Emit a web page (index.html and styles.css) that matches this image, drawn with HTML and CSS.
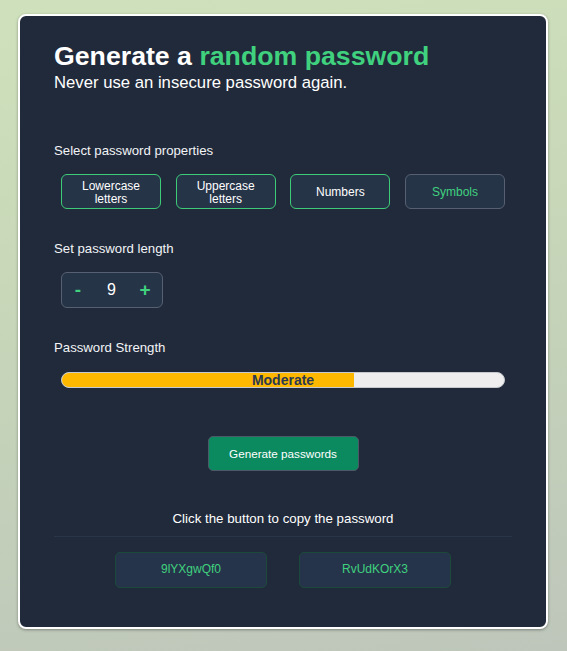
FILE: index.html
```html
<!DOCTYPE html>
<html lang="en">
<head>
<meta charset="utf-8">
<title>Password Generator</title>
<link rel="stylesheet" href="styles.css">
</head>
<body>
<div class="page">
  <main class="card">
    <header class="head">
      <h1 class="title">Generate a <span class="accent">random password</span></h1>
      <p class="subtitle">Never use an insecure password again.</p>
    </header>

    <section class="section first">
      <h2 class="label">Select password properties</h2>
      <div class="props">
        <button class="prop on">Lowercase<br>letters</button>
        <button class="prop on">Uppercase<br>letters</button>
        <button class="prop on">Numbers</button>
        <button class="prop off">Symbols</button>
      </div>
    </section>

    <section class="section">
      <h2 class="label">Set password length</h2>
      <div class="indent">
        <div class="stepper">
          <span class="step">-</span>
          <span class="value">9</span>
          <span class="step">+</span>
        </div>
      </div>
    </section>

    <section class="section">
      <h2 class="label">Password Strength</h2>
      <div class="indent">
        <div class="meter">
          <div class="track"><div class="fill" style="width:66%"></div></div>
          <span class="meter-label">Moderate</span>
        </div>
      </div>
    </section>

    <div class="action">
      <button class="generate">Generate passwords</button>
    </div>

    <p class="copy-hint">Click the button to copy the password</p>
    <div class="results">
      <button class="pw">9lYXgwQf0</button>
      <button class="pw">RvUdKOrX3</button>
    </div>
  </main>
</div>
</body>
</html>
```
FILE: styles.css
```css
* { box-sizing: border-box; }
html, body { margin: 0; padding: 0; }
body {
  font-family: "Liberation Sans", Arial, sans-serif;
  background: linear-gradient(170deg, #cfe1bc 0%, #c7d7b8 40%, #bec6bb 100%);
  min-height: 651px;
}
.page {
  padding: 14px 19px 22px 18px;
}
.card {
  height: 615px;
  background: #212a3a;
  border: 2px solid #ffffff;
  border-radius: 8px;
  box-shadow: 0 1px 3px rgba(0,0,0,0.35);
  padding: 25px 34px 0 34px;
  color: #ffffff;
  display: flex;
  flex-direction: column;
}
.head { display: flex; flex-direction: column; }
.title {
  margin: 0;
  font-size: 26.7px;
  line-height: 30px;
  font-weight: bold;
}
.accent { color: #40d17f; }
.subtitle {
  margin: 2px 0 0 0;
  font-size: 16.7px;
  line-height: 20px;
}
.section { display: flex; flex-direction: column; }
.section.first { margin-top: 50px; }
.section + .section { margin-top: 32px; }
.label {
  margin: 0;
  font-size: 13.2px;
  line-height: 16px;
  font-weight: normal;
  color: #f2f4f7;
}
.props {
  margin-top: 15px;
  padding: 0 7px;
  display: flex;
  justify-content: space-between;
}
.prop {
  width: 100px;
  height: 35px;
  border-radius: 6px;
  background: #263448;
  font-family: inherit;
  font-size: 12px;
  line-height: 13px;
  color: #ffffff;
  padding: 2px 0 0 0;
}
.prop.on { border: 1.5px solid #3ecb78; }
.prop.off { border: 1.5px solid #566072; color: #40d17f; }
.indent { padding: 0 7px; margin-top: 15px; }
.stepper {
  width: 102px;
  height: 36px;
  border: 1.5px solid #566072;
  border-radius: 6px;
  background: #263448;
  display: grid;
  grid-template-columns: 32px 35px 32px;
  align-items: center;
  justify-items: center;
}
.step { color: #40d17f; font-size: 19px; font-weight: bold; }
.value { font-size: 16px; color: #ffffff; }
.meter {
  margin-top: 1px;
  display: grid;
  align-items: center;
  justify-items: center;
}
.track, .meter-label { grid-area: 1 / 1; }
.track {
  width: 100%;
  height: 16px;
  border: 1px solid #c6c9ce;
  border-radius: 8px;
  background: #eeeeee;
  overflow: hidden;
}
.fill { height: 100%; background: #ffb800; }
.meter-label {
  font-size: 14px;
  font-weight: bold;
  color: #2b3a52;
  line-height: 15px;
}
.action { display: flex; justify-content: center; margin-top: 48px; }
.generate {
  width: 151px;
  height: 35px;
  background: #0b8a5f;
  border: 1px solid #4d5868;
  border-radius: 5px;
  color: #ffffff;
  font-family: inherit;
  font-size: 11.7px;
}
.copy-hint {
  margin: 40px 0 0 0;
  text-align: center;
  font-size: 13.3px;
  line-height: 16px;
  padding-bottom: 9px;
  border-bottom: 1px solid #2b3548;
}
.results {
  margin-top: 15px;
  display: flex;
  justify-content: center;
  gap: 32px;
}
.pw {
  width: 152px;
  height: 36px;
  background: #25344a;
  border: 1px solid #1c4a3a;
  border-radius: 5px;
  color: #40d17f;
  font-family: inherit;
  font-size: 12px;
  padding: 0 0 2px 0;
}
```
